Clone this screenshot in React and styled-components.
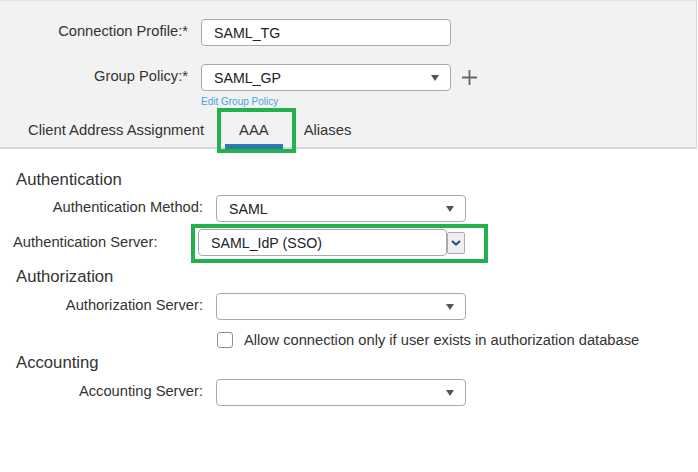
import styled, { createGlobalStyle } from "styled-components";

const GlobalStyle = createGlobalStyle`
  body {
    margin: 0;
    background: #fff;
    font-family: "Liberation Sans", Arial, sans-serif;
    color: #333;
  }
`;

const Page = styled.div`
  width: 698px;
  height: 472px;
  overflow: hidden;
  background: #fff;
`;

const TopPanel = styled.div`
  background: #f2f2f2;
  border-top: 1px solid #e4e4e4;
  border-bottom: 2px solid #d9d9d9;
  border-right: 1px solid #d9d9d9;
  margin-right: 1px;
  padding-top: 18px;
  display: flex;
  flex-direction: column;
`;

const Row = styled.div`
  display: flex;
  align-items: center;
  gap: ${(p) => (p.$gap === undefined ? 13 : p.$gap)}px;
  margin-top: ${(p) => p.$mt || 0}px;
  padding-left: ${(p) => p.$pl || 0}px;
`;

const Label = styled.label`
  width: ${(p) => p.$w}px;
  text-align: ${(p) => (p.$left ? "left" : "right")};
  font-size: 14.7px;
  line-height: 18px;
  color: #333;
  padding-bottom: 4px;
  white-space: nowrap;
`;

const Field = styled.div`
  width: ${(p) => p.$w || 250}px;
  height: 27px;
  box-sizing: border-box;
  border: 1px solid #a9a9a9;
  border-radius: 4px;
  background: #fff;
  display: flex;
  align-items: center;
  justify-content: space-between;
  padding: 0 11px 0 12px;
  font-size: 14.2px;
  color: #222;
`;

const Caret = styled.span`
  width: 0;
  height: 0;
  border-left: 4px solid transparent;
  border-right: 4px solid transparent;
  border-top: 6px solid #555;
`;

const PlusIcon = styled.svg`
  margin-left: -2px;
  flex: none;
`;

const EditLink = styled.a`
  display: block;
  margin: 5px 0 0 201px;
  font-size: 10px;
  line-height: 12px;
  color: #4ba3dc;
  text-decoration: none;
`;

const Tabs = styled.div`
  display: flex;
  gap: 7px;
  padding-left: 14px;
  height: 39px;
`;

const Tab = styled.div`
  position: relative;
  height: 41px;
  margin-bottom: -2px;
  box-sizing: border-box;
  padding: 8px 14px 0;
  border-bottom: 5px solid ${(p) => (p.$active ? "#2e7bb0" : "transparent")};
  font-size: 14.8px;
  line-height: 28px;
  color: #333;
  white-space: nowrap;

  ${(p) =>
    p.$highlight &&
    `
    &::after {
      content: "";
      position: absolute;
      top: 0;
      left: -8px;
      right: -13px;
      bottom: -9px;
      border: 4px solid #22b14c;
    }
  `}
`;

const Section = styled.div`
  padding-top: 21px;
  display: flex;
  flex-direction: column;
`;

const Heading = styled.h3`
  margin: ${(p) => p.$mt || 0}px 0 0;
  padding-left: 16px;
  font-size: 16.7px;
  line-height: 20px;
  font-weight: normal;
  color: #333;
`;

const Highlight = styled.div`
  display: flex;
  align-items: center;
  border: 4px solid #22b14c;
  padding: 1px 19px 3px 3px;
`;

const ComboInput = styled(Field)`
  width: 249px;
  justify-content: flex-start;
`;

const ComboButton = styled.div`
  width: 18px;
  height: 22px;
  box-sizing: border-box;
  border: 1px solid #a9abbd;
  border-radius: 2px;
  background: #efefef;
  display: flex;
  align-items: center;
  justify-content: center;
`;

const CheckRow = styled.label`
  display: flex;
  align-items: center;
  gap: 11px;
  margin: 10px 0 0 217px;
  height: 20px;
  font-size: 14.7px;
  color: #333;
`;

const CheckBox = styled.span`
  width: 16px;
  height: 16px;
  box-sizing: border-box;
  border: 1px solid #8f8f8f;
  border-radius: 3px;
  background: #fff;
`;

const Select = ({ value }) => (
  <Field>
    <span>{value}</span>
    <Caret />
  </Field>
);

export default function App() {
  return (
    <Page>
      <GlobalStyle />
      <TopPanel>
        <Row>
          <Label $w={188}>Connection Profile:*</Label>
          <Field>SAML_TG</Field>
        </Row>
        <Row $mt={18}>
          <Label $w={188}>Group Policy:*</Label>
          <Select value="SAML_GP" />
          <PlusIcon width="15" height="15" viewBox="0 0 15 15">
            <path d="M7.5 0v15M0 7.5h15" stroke="#666" strokeWidth="1.8" />
          </PlusIcon>
        </Row>
        <EditLink href="#">Edit Group Policy</EditLink>
        <Tabs>
          <Tab>Client Address Assignment</Tab>
          <Tab $active $highlight>
            AAA
          </Tab>
          <Tab>Aliases</Tab>
        </Tabs>
      </TopPanel>

      <Section>
        <Heading>Authentication</Heading>
        <Row $mt={5}>
          <Label $w={203}>Authentication Method:</Label>
          <Select value="SAML" />
        </Row>
        <Row $mt={2} $pl={13} $gap={0}>
          <Label $w={178} $left>
            Authentication Server:
          </Label>
          <Highlight>
            <ComboInput>SAML_IdP (SSO)</ComboInput>
            <ComboButton>
              <svg width="10" height="6" viewBox="0 0 10 6">
                <path d="M1 1l4 3.5L9 1" fill="none" stroke="#2d4f8c" strokeWidth="2.2" />
              </svg>
            </ComboButton>
          </Highlight>
        </Row>

        <Heading $mt={4}>Authorization</Heading>
        <Row $mt={6}>
          <Label $w={203}>Authorization Server:</Label>
          <Select value="" />
        </Row>
        <CheckRow>
          <CheckBox />
          Allow connection only if user exists in authorization database
        </CheckRow>

        <Heading $mt={3}>Accounting</Heading>
        <Row $mt={6}>
          <Label $w={203}>Accounting Server:</Label>
          <Select value="" />
        </Row>
      </Section>
    </Page>
  );
}
